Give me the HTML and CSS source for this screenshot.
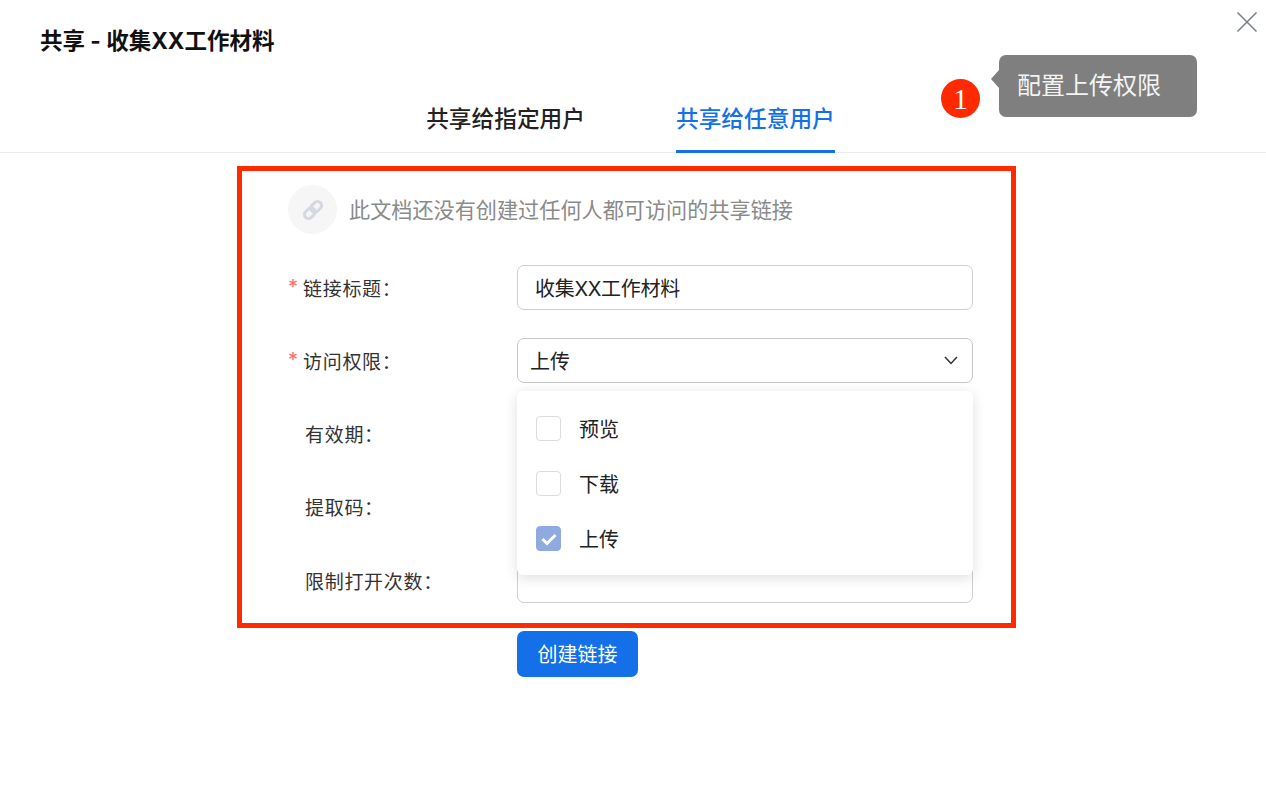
FILE: index.html
```html
<!DOCTYPE html>
<html lang="zh-CN">
<head>
    <meta charset="UTF-8">
    <meta name="viewport" content="width=device-width, initial-scale=1.0">
    <title>共享</title>
    <link rel="stylesheet" href="styles.css">
</head>
<body>
    <div class="dialog">
        <header class="dialog-head">
            <h2>共享 - 收集XX工作材料</h2>
            <button class="close" type="button" aria-label="关闭">
                <svg width="22" height="22" viewBox="0 0 22 22"><path d="M1.500 1.500l19 19M20.500 1.500l-19 19" fill="none" stroke="#7b8090" stroke-width="1.600"/></svg>
            </button>
        </header>

        <nav class="tabs">
            <a class="tab">共享给指定用户</a>
            <a class="tab active">共享给任意用户</a>
        </nav>

        <div class="content">
            <div class="empty-tip">
                <span class="link-icon">
                    <svg width="24" height="24" viewBox="0 0 24 24" fill="none" stroke="#d6d8e0" stroke-width="3">
                        <g transform="rotate(-45 12 12)">
                            <rect x="1.500" y="8" width="12" height="8" rx="4"/>
                            <rect x="10.500" y="8" width="12" height="8" rx="4"/>
                        </g>
                    </svg>
                </span>
                此文档还没有创建过任何人都可访问的共享链接
            </div>

            <form class="share-form">
                <div class="row">
                    <label class="required">链接标题：</label>
                    <div class="field title-field"><span>收集XX工作材料</span></div>
                </div>
                <div class="row">
                    <label class="required">访问权限：</label>
                    <div class="field select-field">
                        <span>上传</span>
                        <svg width="14" height="9" viewBox="0 0 14 9"><path d="M1 1l6 6.500L13 1" fill="none" stroke="#333" stroke-width="1.500"/></svg>
                    </div>
                    <ul class="dropdown">
                        <li><span class="check"></span>预览</li>
                        <li><span class="check"></span>下载</li>
                        <li>
                            <span class="check on">
                                <svg width="18" height="14" viewBox="0 0 18 14"><path d="M2.500 7l4.500 4.500L15.500 3" fill="none" stroke="#fff" stroke-width="3"/></svg>
                            </span>
                            上传
                        </li>
                    </ul>
                </div>
                <div class="row">
                    <label>有效期：</label>
                    <div class="field"></div>
                </div>
                <div class="row">
                    <label>提取码：</label>
                    <div class="field"></div>
                </div>
                <div class="row">
                    <label>限制打开次数：</label>
                    <div class="field"></div>
                </div>
                <button class="submit" type="button">创建链接</button>
            </form>
        </div>

        <!-- annotations on top of the screenshot -->
        <div class="mark-box"></div>
        <div class="badge">1</div>
        <div class="callout">配置上传权限</div>
    </div>
</body>
</html>
```

FILE: styles.css
```css
* {
    box-sizing: border-box;
}
body {
    margin: 0;
    background-color: #fff;
    color: #222;
    font-family: Inter, "Noto Sans CJK SC", "Noto Sans", sans-serif;
}
.dialog {
    position: relative;
    height: 788px;
    overflow: hidden;
}
.dialog-head {
    display: flex;
    justify-content: space-between;
    align-items: flex-start;
    height: 98px;
    padding: 11px 8px 0 40px;
}
.dialog-head h2 {
    margin: 14px 0 0;
    font-size: 22.500px;
    line-height: 32px;
    font-weight: 700;
    color: #111;
}
.close {
    padding: 0;
    border: none;
    background: none;
    line-height: 0;
}
.tabs {
    display: flex;
    justify-content: center;
    gap: 91px;
    height: 55px;
    padding-right: 5px;
    border-bottom: 1px solid #ececec;
}
.tab {
    height: 55px;
    padding: 4px 0 0;
    font-size: 22.700px;
    line-height: 34px;
    font-weight: 500;
    color: #222;
}
.tab.active {
    color: #1470e8;
    border-bottom: 3px solid #1470e8;
}
.content {
    padding: 32px 0 0 288px;
}
.empty-tip {
    display: flex;
    align-items: center;
    gap: 12px;
    height: 49px;
    padding-bottom: 3px;
    font-size: 21.150px;
    color: #8a8a8a;
}
.link-icon {
    display: flex;
    align-items: center;
    justify-content: center;
    flex: none;
    width: 49px;
    height: 49px;
    margin-bottom: -3px;
    border-radius: 50%;
    background-color: #f6f6f7;
}
.share-form {
    width: 685px;
    margin-top: 31px;
}
.row {
    position: relative;
    display: flex;
    align-items: center;
    height: 45px;
    margin-bottom: 28.250px;
}
.row label {
    width: 229px;
    padding-left: 17px;
    padding-bottom: 1px;
    font-size: 19px;
    letter-spacing: 0.700px;
    color: #333;
}
.row label.required {
    position: relative;
    padding-left: 15px;
}
.row label.required::before {
    content: "*";
    position: absolute;
    left: 0;
    top: 1px;
    color: #ff6b6b;
    font-size: 20px;
}
.field {
    display: flex;
    align-items: center;
    width: 456px;
    height: 45px;
    border: 1.500px solid #cfcfcf;
    border-radius: 7px;
    background-color: #fff;
    font-size: 20px;
    color: #222;
}
.field span {
    margin-top: -1px;
}
.title-field {
    padding-left: 17px;
    letter-spacing: -0.300px;
}
.select-field {
    justify-content: space-between;
    padding: 0 14px 0 12px;
    border-color: #c6c6c6;
}
.dropdown {
    position: absolute;
    z-index: 2;
    top: 53px;
    left: 229px;
    width: 456px;
    height: 184px;
    margin: 0;
    padding: 10px 0 0 19px;
    list-style: none;
    background-color: #fff;
    border-radius: 6px;
    box-shadow: 0 3px 14px rgba(0, 0, 0, 0.13);
}
.dropdown li {
    display: flex;
    align-items: center;
    gap: 18px;
    height: 55px;
    font-size: 20px;
    color: #222;
}
.check {
    display: flex;
    align-items: center;
    justify-content: center;
    width: 25px;
    height: 25px;
    border: 1.500px solid #dcdcdc;
    border-radius: 4px;
    background-color: #fff;
}
.check.on {
    border-color: #8eaae0;
    background-color: #8eaae0;
}
.submit {
    display: block;
    width: 121px;
    height: 46px;
    margin-left: 229px;
    margin-top: -0.250px;
    padding: 0 0 2px;
    border: none;
    border-radius: 7px;
    background-color: #1470e8;
    color: #fff;
    font-family: inherit;
    font-size: 20px;
}
.mark-box {
    position: absolute;
    top: 166px;
    left: 237px;
    width: 779px;
    height: 462px;
    border: 5px solid #ff2a00;
    pointer-events: none;
}
.badge {
    position: absolute;
    top: 79px;
    left: 941px;
    width: 39px;
    height: 39px;
    border-radius: 50%;
    background-color: #ff2a00;
    color: #fff;
    font-family: "Liberation Serif", serif;
    font-size: 30px;
    line-height: 39px;
    text-align: center;
}
.callout {
    position: absolute;
    top: 55px;
    left: 999px;
    width: 198px;
    height: 62px;
    padding-left: 18px;
    border-radius: 7px;
    background-color: #7f7f7f;
    color: #f4f4f4;
    font-size: 24px;
    line-height: 61px;
}
.callout::before {
    content: "";
    position: absolute;
    top: 15px;
    left: -8px;
    border-top: 9px solid transparent;
    border-bottom: 9px solid transparent;
    border-right: 8px solid #7f7f7f;
}
```
